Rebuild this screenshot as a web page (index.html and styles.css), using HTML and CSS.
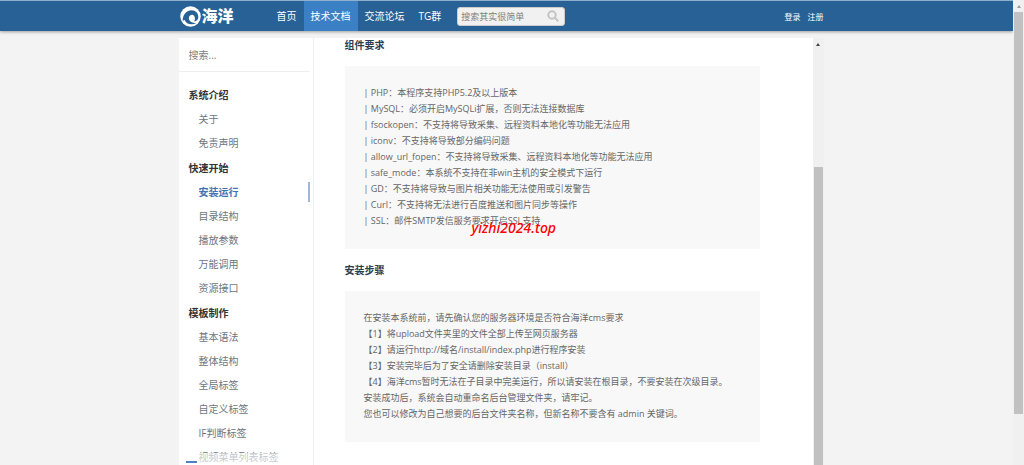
FILE: index.html
```html
<!DOCTYPE html>
<html lang="zh-CN">
<head>
<meta charset="utf-8">
<title>海洋 - 技术文档</title>
<link rel="stylesheet" href="styles.css">
</head>
<body>
<div class="window">
  <div class="page">
    <header class="topbar">
      <div class="container topbar-inner">
        <a class="logo" href="#">
          <svg class="logo-mark" viewBox="0 0 40 40" aria-hidden="true">
            <circle cx="20" cy="20" r="19.5" fill="#fff"/>
            <path d="M5 27C6 15 13 8 22 8C30 8 35 14 35 21C35 26 32 29 27 29C29 26 29 22 27 19C24 15 18 17 17 22C16 27 20 32 31 33C21 37 11 34 9 26C8 28 6 28 5 27Z" fill="#276195"/>
          </svg>
          <span class="logo-text">海洋</span>
        </a>
        <nav class="nav">
          <a href="#">首页</a>
          <a class="active" href="#">技术文档</a>
          <a href="#">交流论坛</a>
          <a href="#">TG群</a>
        </nav>
        <form class="top-search">
          <input type="text" aria-label="站内搜索" placeholder="搜索其实很简单">
          <button type="button" aria-label="搜索">
            <svg viewBox="0 0 12 12" aria-hidden="true"><circle cx="5" cy="5" r="3.7"/><path d="M7.8 7.8L11.3 11.3"/></svg>
          </button>
        </form>
        <div class="account"><a href="#">登录</a><a href="#">注册</a></div>
      </div>
    </header>

    <div class="container panel">
      <aside class="sidebar">
        <div class="side-search"><input type="text" aria-label="搜索文档" placeholder="搜索..."></div>
        <nav class="menu">
          <section>
            <h2>系统介绍</h2>
            <a href="#">关于</a>
            <a href="#">免责声明</a>
          </section>
          <section>
            <h2>快速开始</h2>
            <a class="current" href="#">安装运行</a>
            <a href="#">目录结构</a>
            <a href="#">播放参数</a>
            <a href="#">万能调用</a>
            <a href="#">资源接口</a>
          </section>
          <section>
            <h2>模板制作</h2>
            <a href="#">基本语法</a>
            <a href="#">整体结构</a>
            <a href="#">全局标签</a>
            <a href="#">自定义标签</a>
            <a href="#">IF判断标签</a>
            <a href="#">视频菜单列表标签</a>
          </section>
        </nav>
        <div class="fade"></div>
      </aside>

      <main class="content">
        <h3>组件要求</h3>
        <div class="box">
          <p>| PHP：本程序支持PHP5.2及以上版本</p>
          <p>| MySQL：必须开启MySQLi扩展，否则无法连接数据库</p>
          <p>| fsockopen：不支持将导致采集、远程资料本地化等功能无法应用</p>
          <p>| iconv：不支持将导致部分编码问题</p>
          <p>| allow_url_fopen：不支持将导致采集、远程资料本地化等功能无法应用</p>
          <p>| safe_mode：本系统不支持在非win主机的安全模式下运行</p>
          <p>| GD：不支持将导致与图片相关功能无法使用或引发警告</p>
          <p>| Curl：不支持将无法进行百度推送和图片同步等操作</p>
          <p>| SSL：邮件SMTP发信服务要求开启SSL支持</p>
          <span class="watermark">yizhi2024.top</span>
        </div>
        <h3>安装步骤</h3>
        <div class="box">
          <p>在安装本系统前，请先确认您的服务器环境是否符合海洋cms要求</p>
          <p>【1】将upload文件夹里的文件全部上传至网页服务器</p>
          <p>【2】请运行http://域名/install/index.php进行程序安装</p>
          <p>【3】安装完毕后为了安全请删除安装目录（install）</p>
          <p>【4】海洋cms暂时无法在子目录中完美运行，所以请安装在根目录，不要安装在次级目录。</p>
          <p>安装成功后，系统会自动重命名后台管理文件夹，请牢记。</p>
          <p>您也可以修改为自己想要的后台文件夹名称，但新名称不要含有 admin 关键词。</p>
        </div>
      </main>
      <div class="scrollbar inner"><span class="arrow"></span><span class="thumb"></span></div>
    </div>
  </div>
  <div class="scrollbar outer"><span class="arrow"></span><span class="thumb"></span></div>
</div>
</body>
</html>
```

FILE: styles.css
```css
* { box-sizing: border-box; }

body {
  margin: 0;
  background: #f3f3f3;
  color: #666;
  font-family: "Open Sans", "Noto Sans CJK SC", sans-serif;
  font-size: 10px;
}

a { color: inherit; text-decoration: none; }
h2, h3, p { margin: 0; }

input, button {
  font: inherit;
  border: 0;
  padding: 0;
  background: none;
  outline: 0;
}

.window {
  display: flex;
  height: 100vh;
  overflow: hidden;
}

.page {
  flex: 1;
  min-width: 0;
  display: flex;
  flex-direction: column;
}

/* Centred column, with room on the right for the panel's scrollbar */
.container {
  width: 100%;
  max-width: 645px;
  margin-left: max(0px, calc(50% - 328px));
}

/* Top bar */
.topbar {
  flex: none;
  background: #276195;
  border-top: 1px solid #8fb0cc;
  box-shadow: 0 1px 3px rgba(0, 0, 0, 0.35);
}

.topbar-inner {
  display: flex;
  align-items: center;
  height: 30px;
  color: #fff;
}

.logo {
  display: flex;
  align-items: center;
  gap: 1px;
  width: 91px;
  padding-left: 1px;
}

.logo-mark { width: 21px; height: 21px; }

.logo-text {
  font-size: 16px;
  font-weight: 900;
  line-height: 20px;
}

.nav { display: flex; height: 100%; }
.nav a { padding: 0 7px; line-height: 30px; }
.nav .active { background: #3b7fc4; }

.top-search {
  display: flex;
  align-items: center;
  width: 108px;
  height: 19px;
  margin-left: 9px;
  padding: 0 5px 0 3px;
  background: #f1f1f1;
  border: 1px solid #ccc;
  border-radius: 3px;
}

.top-search input {
  flex: 1;
  min-width: 0;
  font-size: 9px;
}

.top-search button { width: 12px; height: 12px; }

.top-search svg {
  display: block;
  width: 12px;
  height: 12px;
  fill: none;
  stroke: #c4c4c4;
  stroke-width: 2;
}

input::placeholder { color: #808080; opacity: 1; }

.account {
  display: flex;
  gap: 7px;
  margin-left: auto;
  font-size: 8px;
}

/* Document panel */
.panel {
  flex: 1;
  min-height: 0;
  display: flex;
  margin-top: 7px;
  background: #fff;
}

.sidebar {
  position: relative;
  flex: none;
  width: 135px;
  overflow: hidden;
  border-right: 1px solid #eee;
}

.side-search {
  height: 34px;
  margin-right: 3px;
  padding: 0 10px;
  border-bottom: 1px solid #eee;
}

.side-search input { width: 100%; height: 33px; }

.menu {
  display: flex;
  flex-direction: column;
  gap: 1px;
  padding: 11px 3px 0 10px;
  line-height: 24px;
}

.menu h2 {
  font-size: 10px;
  line-height: 24px;
  color: #333;
}

.menu a {
  display: block;
  padding-left: 10px;
  color: #6b7680;
}

.menu .current {
  color: #4673b0;
  font-weight: bold;
  background: linear-gradient(#9fb6da, #9fb6da) right center / 2px 20px no-repeat;
}

.fade {
  position: absolute;
  left: 0;
  right: 0;
  bottom: 0;
  height: 12px;
  background: linear-gradient(#4f80c4, #4f80c4) 7px 8px / 11px 2px no-repeat,
    rgba(255, 255, 255, 0.6);
}

.content {
  flex: 1;
  min-width: 0;
  overflow: hidden;
  padding: 0 53px 0 31px;
}

.content h3 {
  font-size: 10px;
  line-height: 14px;
  color: #2c3e50;
}

.box {
  position: relative;
  margin: 14px 0;
  padding: 19px 19px 20px;
  background: #f8f8f8;
  font-size: 9px;
  line-height: 16px;
}

.watermark {
  position: absolute;
  left: 127px;
  bottom: 12px;
  color: #f00;
  font: italic 500 14px/18px "Noto Sans", sans-serif;
}

/* Scrollbars */
.scrollbar {
  flex: none;
  display: flex;
  flex-direction: column;
  align-items: center;
  width: 11px;
  background: #f0f0f0;
}

.arrow {
  border: 2px solid transparent;
  border-top: 0;
  border-bottom: 3px solid #444;
}

.thumb { width: 9px; background: #c1c1c1; }

.inner .arrow { margin-top: 5px; }
.inner .thumb { flex: 1; margin-top: 121px; }
.outer .arrow { margin-top: 5px; border-bottom-color: #999; }
.outer .thumb { margin-top: 4px; height: 86.5%; }
```
